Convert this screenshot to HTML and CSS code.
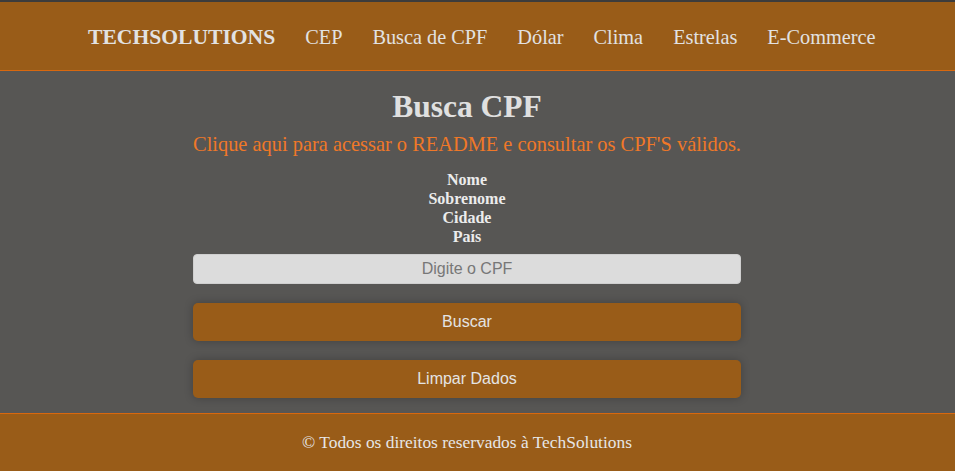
FILE: index.html
```html
<!DOCTYPE html>
<html lang="pt-BR">
<head>
<meta charset="utf-8">
<title>Busca CPF</title>
<link rel="stylesheet" href="styles.css">
</head>
<body>
<header class="topbar">
  <nav class="nav">
    <a class="brand" href="#">TECHSOLUTIONS</a>
    <a class="nav-link" href="#">CEP</a>
    <a class="nav-link" href="#">Busca de CPF</a>
    <a class="nav-link" href="#">Dólar</a>
    <a class="nav-link" href="#">Clima</a>
    <a class="nav-link" href="#">Estrelas</a>
    <a class="nav-link" href="#">E-Commerce</a>
  </nav>
</header>
<main class="main">
  <h1 class="title">Busca CPF</h1>
  <a class="readme" href="#">Clique aqui para acessar o README e consultar os CPF'S válidos.</a>
  <div class="fields">
    <p class="field">Nome</p>
    <p class="field">Sobrenome</p>
    <p class="field">Cidade</p>
    <p class="field">País</p>
  </div>
  <input class="cpf-input" type="text" placeholder="Digite o CPF">
  <button class="btn" type="button">Buscar</button>
  <button class="btn" type="button">Limpar Dados</button>
</main>
<footer class="footer">
  <p class="copy">© Todos os direitos reservados à TechSolutions</p>
</footer>
</body>
</html>
```
FILE: styles.css
```css
* { box-sizing: border-box; }
html, body { height: 100%; }
body {
  margin: 0;
  background: #575654;
  font-family: "Liberation Serif", "DejaVu Serif", serif;
  color: #dddddd;
  display: flex;
  flex-direction: column;
}
.topbar {
  background: #995c18;
  border-top: 2px solid #3c3c3c;
  border-bottom: 1px solid #d8680f;
  height: 71px;
  display: flex;
  align-items: center;
}
.nav {
  display: flex;
  align-items: baseline;
  gap: 30px;
  padding-left: 88px;
  margin-top: 2px;
}
.brand {
  color: #e2e2e2;
  font-weight: bold;
  font-size: 21.6px;
  text-decoration: none;
}
.nav-link {
  color: #e2e2e2;
  font-size: 20.3px;
  text-decoration: none;
}
.main {
  flex: 1;
  width: 548px;
  margin-left: 193px;
  display: flex;
  flex-direction: column;
  align-items: center;
}
.title {
  margin: 16px 0 0;
  font-size: 31.5px;
  font-weight: bold;
  color: #e0e0e0;
  line-height: 40px;
}
.readme {
  color: #f07828;
  font-size: 20.4px;
  text-decoration: none;
  margin-top: 4px;
  line-height: 26px;
}
.fields {
  margin-top: 13px;
  display: flex;
  flex-direction: column;
  align-items: center;
}
.field {
  margin: 0;
  font-size: 16px;
  font-weight: bold;
  line-height: 19px;
  color: #ececec;
}
.cpf-input {
  margin-top: 8px;
  width: 100%;
  height: 30px;
  border: 1px solid #cfcfcf;
  border-radius: 4px;
  background: #dcdcdc;
  font-family: "Liberation Sans", Arial, sans-serif;
  font-size: 16px;
  text-align: center;
  color: #333;
}
.cpf-input::placeholder { color: #777777; }
.btn {
  margin-top: 19px;
  width: 100%;
  height: 38px;
  border: none;
  border-radius: 5px;
  background: #995c18;
  color: #e4e4e4;
  font-family: "Liberation Sans", Arial, sans-serif;
  font-size: 16px;
  box-shadow: 0 0 8px rgba(0, 0, 0, 0.25);
}
.footer {
  background: #995c18;
  border-top: 1px solid #d8680f;
  height: 58px;
  display: flex;
  align-items: center;
  justify-content: center;
  padding-right: 21px;
}
.copy {
  margin: 0;
  font-size: 17.4px;
  color: #e6e6e6;
}
```
